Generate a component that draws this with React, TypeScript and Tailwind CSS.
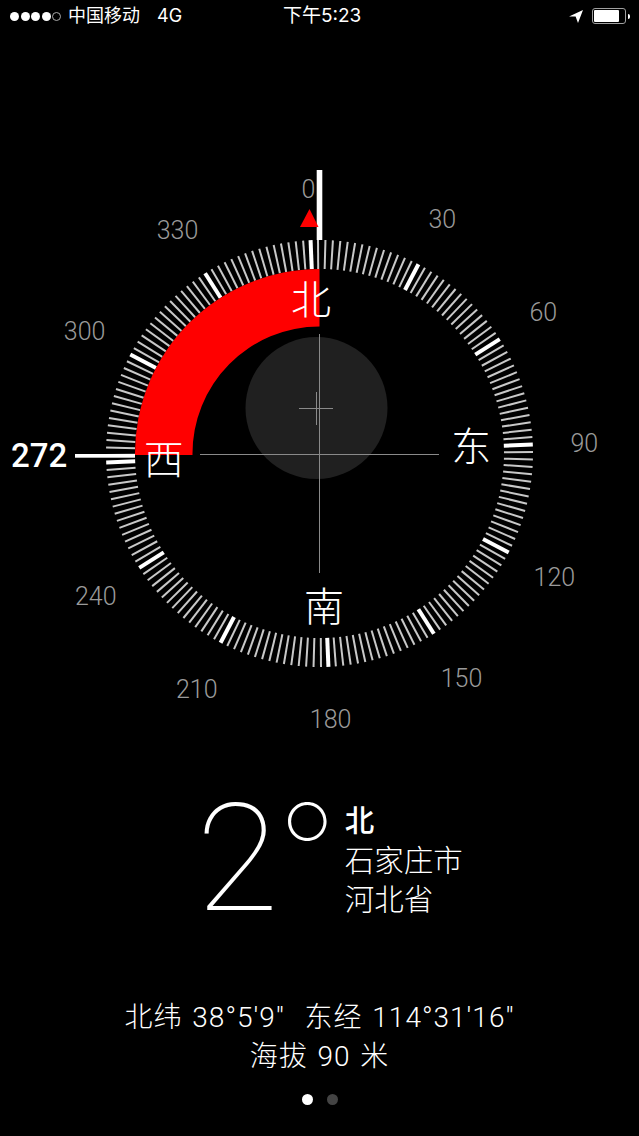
import React from "react";

const latin = "font-['Inter','Noto_Sans_CJK_SC',sans-serif]";
const figures = "font-['Roboto','Noto_Sans_CJK_SC',sans-serif]";

const CX = 319.5;
const CY = 453.5;
const DIAL_ROTATION = -2.4;

// point on the dial; angle 0 is up, clockwise
const polar = (deg: number, r: number) => {
  const a = (deg * Math.PI) / 180;
  return { x: CX + r * Math.sin(a), y: CY - r * Math.cos(a) };
};

const ticks = Array.from({ length: 180 }, (_, i) => i * 2);
const degreeLabels = [0, 30, 60, 90, 120, 150, 180, 210, 240, 300, 330];
const cardinals = [
  { label: "北", deg: 0 },
  { label: "东", deg: 90 },
  { label: "南", deg: 180 },
  { label: "西", deg: 270 },
];

const redArc = () => {
  const outer = 184.5;
  const inner = 127;
  const y = CY + 1.5;
  const ox = CX - Math.sqrt(outer * outer - 1.5 * 1.5);
  const ix = CX - Math.sqrt(inner * inner - 1.5 * 1.5);
  return `M${CX} ${CY - outer}A${outer} ${outer} 0 0 0 ${ox} ${y}L${ix} ${y}A${inner} ${inner} 0 0 1 ${CX} ${CY - inner}Z`;
};

const StatusBar = () => (
  <div className={`relative flex h-[32px] items-center justify-between pl-[10px] pr-[9px] text-white ${latin}`}>
    <div className="flex items-center">
      <div className="flex items-center gap-[1.5px]">
        <span className="h-[9px] w-[9px] rounded-full bg-white" />
        <span className="h-[9px] w-[9px] rounded-full bg-white" />
        <span className="h-[9px] w-[9px] rounded-full bg-white" />
        <span className="h-[9px] w-[9px] rounded-full bg-white" />
        <span className="h-[9px] w-[9px] rounded-full border border-[#aaaaaa]" />
      </div>
      <span className="ml-[7px] text-[18px] leading-none">中国移动</span>
      <span className="ml-[17px] text-[18px] leading-none">4G</span>
    </div>
    <span className="absolute left-[283px] top-[6px] text-[19px] leading-none">下午5:23</span>
    <div className="flex items-center">
      <svg width="14" height="13" viewBox="0 0 14 13" className="mr-[9px]">
        <path d="M14 0 0 6.4h6.6L9 13z" fill="#fff" />
      </svg>
      <div className="flex h-[16px] w-[34px] items-center rounded-[3px] border border-[#a0a0a0] p-[1px]">
        <div className="h-full w-[25px] rounded-[1px] bg-white" />
      </div>
      <div className="ml-[2px] h-[5px] w-[2px] rounded-r-full bg-white" />
    </div>
  </div>
);

const CompassDial = () => (
  <svg viewBox="0 130 639 610" width="639" height="610" className="mt-[98px] block">
    <circle cx="316.5" cy="408" r="71" fill="#202020" />

    {/* fine lines */}
    <path d="M319.5 334V573M200 454.5H439" stroke="#8a8a8a" strokeWidth="1" fill="none" />
    <path d="M316.5 392V425M299 408.5H333" stroke="#8a8a8a" strokeWidth="1" fill="none" />

    {ticks.map((deg) => {
      const major = deg % 30 === 0;
      const a = polar(deg + DIAL_ROTATION, 184.5);
      const b = polar(deg + DIAL_ROTATION, 213.5);
      return (
        <line
          key={deg}
          x1={a.x}
          y1={a.y}
          x2={b.x}
          y2={b.y}
          stroke={major ? "#ffffff" : "#c8c8c8"}
          strokeWidth={major ? 4 : 2}
        />
      );
    })}

    <path d={redArc()} fill="#ff0000" />

    {/* heading needle and bearing marker */}
    <rect x="316.7" y="170" width="5.6" height="70" fill="#ffffff" />
    <path d="M309.5 209 318.5 227H300Z" fill="#ff0000" />
    <rect x="75" y="454" width="60" height="3.7" fill="#ffffff" />

    {degreeLabels.map((deg) => {
      const p = polar(deg + DIAL_ROTATION, 265);
      return (
        <text
          key={deg}
          x={p.x}
          y={p.y + 9.5}
          textAnchor="middle"
          fill="#9a9a9a"
          className={`text-[25px] font-light ${figures}`}
        >
          {deg}
        </text>
      );
    })}

    {cardinals.map((c) => {
      const p = polar(c.deg + DIAL_ROTATION, 154);
      return (
        <text
          key={c.label}
          x={p.x - 2}
          y={p.y + 14}
          textAnchor="middle"
          fill="#ffffff"
          className={`text-[40px] font-light ${latin}`}
        >
          {c.label}
        </text>
      );
    })}

    <text x="11" y="467" fill="#ffffff" className={`text-[33px] font-medium ${figures}`}>
      272
    </text>
  </svg>
);

const Readout = () => (
  <div className={`mt-[31px] flex h-[160px] items-start pl-[196px] text-white ${figures}`}>
    <span className="text-[151px] font-thin leading-[160px]">
      2<span className={`-ml-[1px] align-[12px] text-[130px] ${latin}`}>°</span>
    </span>
    <div className="ml-[8px] mt-[31px] text-[29.5px] leading-[39.5px]">
      <div className="font-medium">北</div>
      <div className="font-light">石家庄市</div>
      <div className="font-light">河北省</div>
    </div>
  </div>
);

const Coordinates = () => (
  <div className={`mt-[67px] text-center text-[28px] font-light leading-[39px] tracking-[1px] text-white [word-spacing:2px] ${figures}`}>
    <div>北纬 38°5′9″&nbsp; 东经 114°31′16″</div>
    <div>海拔 90 米</div>
  </div>
);

const PageDots = () => (
  <div className="mt-[18px] flex justify-center gap-[14px] pl-[1px]">
    <span className="h-[11px] w-[11px] rounded-full bg-white" />
    <span className="h-[11px] w-[11px] rounded-full bg-[#444444]" />
  </div>
);

const App: React.FC = () => {
  return (
    <div className="h-[1136px] w-full overflow-hidden bg-black">
      <StatusBar />
      <CompassDial />
      <Readout />
      <Coordinates />
      <PageDots />
    </div>
  );
};

export default App;
